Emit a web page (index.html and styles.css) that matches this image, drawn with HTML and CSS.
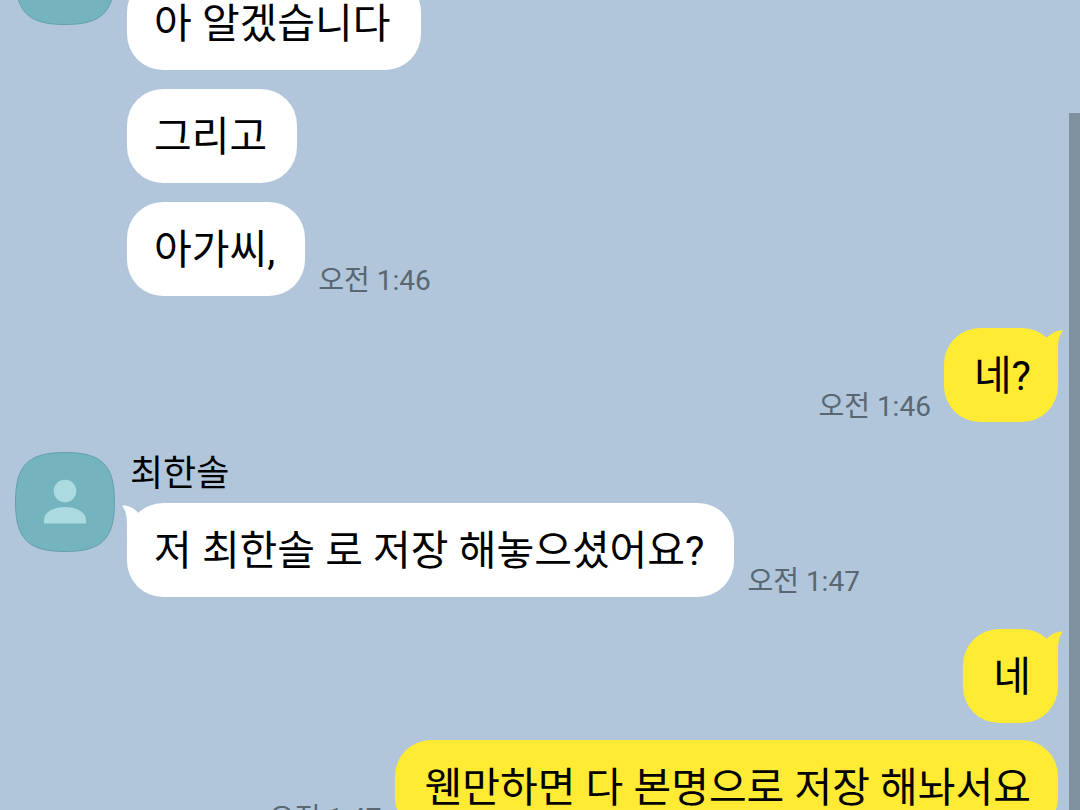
FILE: index.html
```html
<!DOCTYPE html>
<html lang="ko">
<head>
<meta charset="utf-8">
<meta name="viewport" content="width=device-width, initial-scale=1">
<title>최한솔</title>
<link rel="stylesheet" href="styles.css">
</head>
<body>
<svg class="defs" aria-hidden="true">
  <symbol id="avatar" viewBox="0 0 100 100">
    <path d="M50 .5C87 .5 99.500 13 99.500 50S87 99.500 50 99.500 .5 87 .5 50 13 .5 50 .5Z" fill="#74b4bf" stroke="#659fae"/>
    <circle cx="50" cy="39" r="11.300" fill="#abdae0"/>
    <path d="M29 71.500V68C29 60 39 55 50 55S71 60 71 68V71.500Z" fill="#abdae0"/>
  </symbol>
  <symbol id="tail" viewBox="0 0 24 34">
    <path d="M0 2.500C6 2 11 4.500 16 9.500L24 14V34H5V22C5 13 4 8 0 2.500Z" fill="currentColor"/>
  </symbol>
</svg>
<main class="chat">
  <section class="group theirs scrolled">
    <svg class="avatar"><use href="#avatar"/></svg>
    <div class="messages">
      <div class="name"></div>
      <div class="row"><p class="bubble">아 알겠습니다</p></div>
      <div class="row"><p class="bubble">그리고</p></div>
      <div class="row"><p class="bubble">아가씨,</p><time class="time">오전 1:46</time></div>
    </div>
  </section>
  <section class="group mine">
    <div class="messages">
      <div class="row"><p class="bubble">네?<svg class="tail"><use href="#tail"/></svg></p><time class="time">오전 1:46</time></div>
    </div>
  </section>
  <section class="group theirs">
    <svg class="avatar"><use href="#avatar"/></svg>
    <div class="messages">
      <div class="name">최한솔</div>
      <div class="row"><p class="bubble">저 최한솔 로 저장 해놓으셨어요?<svg class="tail"><use href="#tail"/></svg></p><time class="time">오전 1:47</time></div>
    </div>
  </section>
  <section class="group mine">
    <div class="messages">
      <div class="row"><p class="bubble">네<svg class="tail"><use href="#tail"/></svg></p></div>
      <div class="row"><p class="bubble">웬만하면 다 본명으로 저장 해놔서요</p><time class="time">오전 1:47</time></div>
    </div>
  </section>
  <div class="scrollbar"></div>
</main>
</body>
</html>
```

FILE: styles.css
```css
* {
  box-sizing: border-box;
}

body {
  margin: 0;
  background: #b1c6da;
  color: #000;
  font-family: Roboto, "Noto Sans CJK KR", sans-serif;
}

.defs {
  position: absolute;
  width: 0;
  height: 0;
}

.chat {
  position: relative;
  height: 100vh;
  overflow: hidden;
}

.group {
  display: flex;
  gap: 12px;
  padding: 0 22px 0 15px;
}

.theirs {
  margin-top: 30px;
}

.mine {
  margin-top: 32px;
  justify-content: flex-end;
}

/* The list is scrolled part-way through its first group. */
.scrolled {
  margin-top: -75px;
}

.avatar {
  flex: none;
  width: 100px;
  height: 100px;
}

.messages {
  display: flex;
  flex-direction: column;
  min-width: 0;
}

.name {
  height: 51px;
  padding-left: 3px;
  font-size: 36px;
  line-height: 44px;
}

.row {
  display: flex;
  align-items: flex-end;
  gap: 13px;
}

.mine .row {
  flex-direction: row-reverse;
}

.row + .row {
  margin-top: 19px;
}

.mine .row + .row {
  margin-top: 17px;
}

.bubble {
  position: relative;
  margin: 0;
  padding: 24px 30px 22px 27px;
  border-radius: 36px;
  background: #fff;
  font-size: 41px;
  line-height: 48px;
}

.mine .bubble {
  padding-right: 27px;
  padding-left: 30px;
  background: #ffeb33;
}

.tail {
  position: absolute;
  top: 0;
  left: -5px;
  width: 24px;
  height: 34px;
  color: #fff;
}

.mine .tail {
  left: auto;
  right: -5px;
  color: #ffeb33;
  transform: scaleX(-1);
}

.time {
  flex: none;
  color: #596772;
  font-size: 28px;
  line-height: 30px;
}

.scrollbar {
  position: absolute;
  top: 113px;
  right: 0;
  bottom: 0;
  width: 11px;
  background: #7f909e;
}
```
